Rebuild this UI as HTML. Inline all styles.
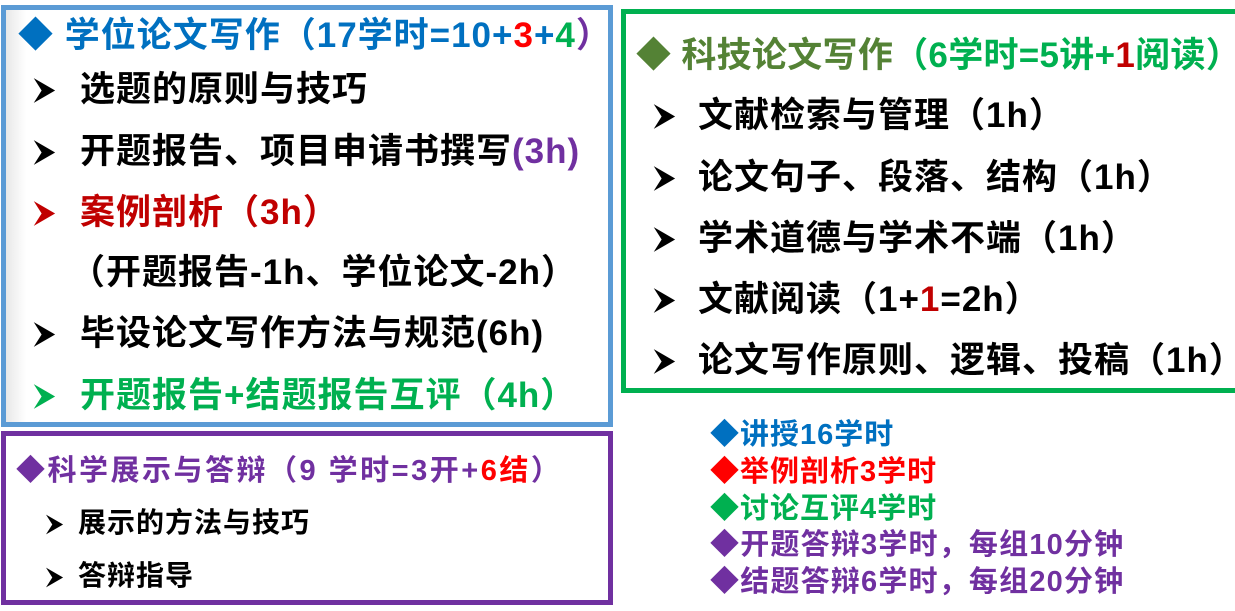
<!DOCTYPE html>
<html><head><meta charset="utf-8"><style>
body{margin:0;width:1235px;height:611px;background:#fff;overflow:hidden;position:relative;font-family:"Liberation Sans","Noto Sans CJK SC",sans-serif;font-weight:bold}
.box{position:absolute;box-sizing:border-box}
.t{position:absolute;white-space:nowrap;line-height:1}
.B{color:#0070c0}.R{color:#ff0000}.DR{color:#c00000}.G{color:#00b050}.P{color:#7030a0}.DG{color:#548235}
.arr{position:absolute}
.big{font-size:35px;letter-spacing:1px}
</style></head><body>
<div class="box" style="left:1px;top:5px;width:612px;height:422px;border:5px solid #5b9bd5;background:linear-gradient(90deg,#e8e8e8,#fff 20px)"></div>
<div class="box" style="left:1px;top:431px;width:612px;height:174px;border:5px solid #7030a0;background:#fff"></div>
<div class="box" style="left:621px;top:9px;width:620px;height:384px;border:5px solid #00b050;background:#fff"></div>

<div class="t" style="left:18px;top:18px;font-size:35px;letter-spacing:1px"><span class="B">◆ 学位论文写作（17学时=10+</span><span class="R">3</span><span class="B">+</span><span class="G">4</span><span class="P">）</span></div>

<svg class="arr" style="left:33px;top:77px" width="24" height="27" viewBox="0 0 20 24"><path d="M0 1 L19 12 L0 23 L7 12 Z" fill="#000"/></svg>
<div class="t big" style="left:80px;top:72px">选题的原则与技巧</div>
<svg class="arr" style="left:33px;top:139px" width="24" height="27" viewBox="0 0 20 24"><path d="M0 1 L19 12 L0 23 L7 12 Z" fill="#000"/></svg>
<div class="t big" style="left:80px;top:134px">开题报告、项目申请书撰写<span class="P">(3h)</span></div>
<svg class="arr" style="left:33px;top:200px" width="24" height="27" viewBox="0 0 20 24"><path d="M0 1 L19 12 L0 23 L7 12 Z" fill="#c00000"/></svg>
<div class="t DR big" style="left:80px;top:195px">案例剖析（3h）</div>
<div class="t big" style="left:70px;top:255px">（开题报告-1h、学位论文-2h）</div>
<svg class="arr" style="left:33px;top:321px" width="24" height="27" viewBox="0 0 20 24"><path d="M0 1 L19 12 L0 23 L7 12 Z" fill="#000"/></svg>
<div class="t big" style="left:80px;top:316px">毕设论文写作方法与规范(6h)</div>
<svg class="arr" style="left:33px;top:383px" width="24" height="27" viewBox="0 0 20 24"><path d="M0 1 L19 12 L0 23 L7 12 Z" fill="#00b050"/></svg>
<div class="t G big" style="left:80px;top:378px">开题报告+结题报告互评（4h）</div>

<div class="t" style="left:16px;top:457px;font-size:29px;letter-spacing:2.5px"><span class="P">◆科学展示与答辩（9 学时=3开+</span><span class="R">6结</span><span class="P">）</span></div>
<svg class="arr" style="left:46px;top:513px" width="18" height="23" viewBox="0 0 20 24"><path d="M0 1 L19 12 L0 23 L7 12 Z" fill="#000"/></svg>
<div class="t" style="left:78px;top:509px;font-size:28px;letter-spacing:1px">展示的方法与技巧</div>
<svg class="arr" style="left:46px;top:566px" width="18" height="23" viewBox="0 0 20 24"><path d="M0 1 L19 12 L0 23 L7 12 Z" fill="#000"/></svg>
<div class="t" style="left:78px;top:562px;font-size:28px;letter-spacing:1px">答辩指导</div>

<div class="t" style="left:636px;top:38px;font-size:35px;letter-spacing:0.3px"><span class="DG">◆ 科技论文写作</span><span class="G">（6学时=5讲+</span><span class="DR">1</span><span class="G">阅读）</span></div>
<svg class="arr" style="left:653px;top:103px" width="24" height="27" viewBox="0 0 20 24"><path d="M0 1 L19 12 L0 23 L7 12 Z" fill="#000"/></svg>
<div class="t big" style="left:698px;top:98px">文献检索与管理（1h）</div>
<svg class="arr" style="left:653px;top:165px" width="24" height="27" viewBox="0 0 20 24"><path d="M0 1 L19 12 L0 23 L7 12 Z" fill="#000"/></svg>
<div class="t big" style="left:698px;top:160px">论文句子、段落、结构（1h）</div>
<svg class="arr" style="left:653px;top:226px" width="24" height="27" viewBox="0 0 20 24"><path d="M0 1 L19 12 L0 23 L7 12 Z" fill="#000"/></svg>
<div class="t big" style="left:698px;top:221px">学术道德与学术不端（1h）</div>
<svg class="arr" style="left:653px;top:287px" width="24" height="27" viewBox="0 0 20 24"><path d="M0 1 L19 12 L0 23 L7 12 Z" fill="#000"/></svg>
<div class="t big" style="left:698px;top:282px">文献阅读（1+<span class="DR">1</span>=2h）</div>
<svg class="arr" style="left:653px;top:348px" width="24" height="27" viewBox="0 0 20 24"><path d="M0 1 L19 12 L0 23 L7 12 Z" fill="#000"/></svg>
<div class="t big" style="left:698px;top:343px">论文写作原则、逻辑、投稿（1h）</div>

<div class="t B" style="left:710px;top:421px;font-size:29px;letter-spacing:1px">◆讲授16学时</div>
<div class="t R" style="left:710px;top:458px;font-size:29px;letter-spacing:1px">◆举例剖析3学时</div>
<div class="t G" style="left:710px;top:495px;font-size:29px;letter-spacing:1px">◆讨论互评4学时</div>
<div class="t P" style="left:710px;top:531px;font-size:29px;letter-spacing:1.2px">◆开题答辩3学时，每组10分钟</div>
<div class="t P" style="left:710px;top:568px;font-size:29px;letter-spacing:1.2px">◆结题答辩6学时，每组20分钟</div>
</body></html>
